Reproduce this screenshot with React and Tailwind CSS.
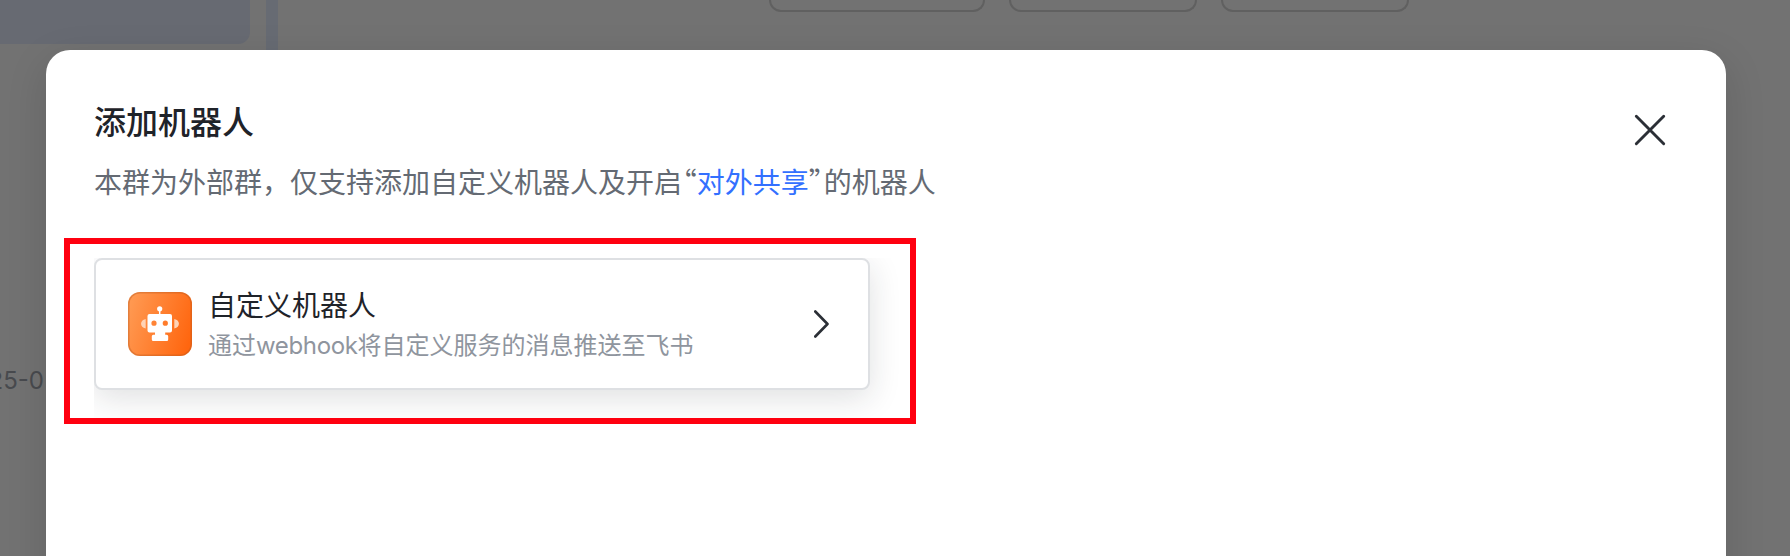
const sans = "font-['Inter','Noto_Sans_CJK_SC',sans-serif]";

function Backdrop() {
  return (
    <div className="absolute inset-0 flex overflow-hidden bg-[#727272]">
      <aside className="flex w-[266px] shrink-0 flex-col">
        <div className="h-11 w-[250px] rounded-br-xl bg-[#676a72]" />
        <div className="mt-[323px] flex w-[44px] justify-end whitespace-nowrap text-2xl leading-7 text-[#484a4e]">
          25-0
        </div>
      </aside>
      <div className="w-3 shrink-0 bg-[#676b73]" />
      <main className="flex items-start gap-6 pl-[491px]">
        <div className="h-3 w-[216px] rounded-b-xl border-2 border-t-0 border-[#606060]" />
        <div className="h-3 w-[188px] rounded-b-xl border-2 border-t-0 border-[#606060]" />
        <div className="h-3 w-[188px] rounded-b-xl border-2 border-t-0 border-[#606060]" />
      </main>
    </div>
  );
}

function Quote({ children }) {
  return (
    <span
      lang="zh-CN"
      className="inline-flex w-[14.8px] justify-center font-['Noto_Sans_CJK_SC',sans-serif] [font-feature-settings:'palt']"
    >
      {children}
    </span>
  );
}

function RobotIcon() {
  return (
    <svg width="64" height="64" viewBox="0 0 64 64" className="shrink-0">
      <defs>
        <linearGradient id="robotBg" x1="0" y1="0.35" x2="1" y2="0.65">
          <stop offset="0" stopColor="#ff9850" />
          <stop offset="1" stopColor="#ff660f" />
        </linearGradient>
      </defs>
      <rect width="64" height="64" rx="12" fill="url(#robotBg)" />
      <rect x="0.75" y="0.75" width="62.5" height="62.5" rx="11.25" fill="none" stroke="#b85a20" strokeOpacity="0.4" strokeWidth="1.5" />
      <path d="M17.700 27v9.500c-6.200-1-6.200-8.500 0-9.500zM46.300 27v9.500c6.200-1 6.200-8.500 0-9.500z" fill="#ffd3b5" />
      <circle cx="31.700" cy="16.800" r="2.600" fill="#fff" />
      <path d="M31.700 17v6" stroke="#fff" strokeWidth="1.500" />
      <path fillRule="evenodd" fill="#fff" d="M21.500 22h20.500a2 2 0 0 1 2 2v14.500a2 2 0 0 1-2 2h-4.800v2.300h1.500a1.500 1.500 0 0 1 1.500 1.500v3.200a1.500 1.500 0 0 1-1.500 1.500h-13.400a1.500 1.500 0 0 1-1.500-1.500v-3.200a1.500 1.500 0 0 1 1.500-1.500h1.700v-2.300h-5.500a2 2 0 0 1-2-2v-14.500a2 2 0 0 1 2-2zM26 28.600a2.600 2.600 0 1 0 0 5.200a2.600 2.600 0 0 0 0-5.200zM37.300 28.600a2.600 2.600 0 1 0 0 5.200a2.600 2.600 0 0 0 0-5.200z" />
    </svg>
  );
}

function RobotCard() {
  return (
    <div className="h-[160px] w-[816px] overflow-hidden">
      <div className="flex h-[132px] w-[776px] items-center rounded-lg border-2 border-[#dee0e3] bg-white pl-8 pr-[39px] shadow-[0_8px_32px_rgba(31,35,41,0.14)]">
        <RobotIcon />
        <div className="ml-4 flex-1">
          <div className="text-[28px] leading-[44px] text-[#1f2329]">自定义机器人</div>
          <div className="text-2xl leading-9 text-[#8f959e]">
            通过<span className="tracking-[-0.35px]">webhook</span>将自定义服务的消息推送至飞书
          </div>
        </div>
        <svg width="15" height="28" viewBox="0 0 15 28" fill="none" stroke="#2b2f36" strokeWidth="2.6" strokeLinecap="round" strokeLinejoin="round">
          <path d="M1.300 1.500L13.500 14L1.300 26.500" />
        </svg>
      </div>
    </div>
  );
}

export default function App() {
  return (
    <div className={`relative h-[556px] w-[1790px] overflow-hidden ${sans}`}>
      <Backdrop />
      <section className="relative ml-[46px] mt-[50px] h-[560px] w-[1680px] rounded-t-3xl bg-white px-12 pt-[51px] shadow-[0_12px_40px_rgba(0,0,0,0.13)]">
        <header className="flex items-start justify-between">
          <div>
            <h1 className="text-[32px] font-medium leading-[44px] text-[#1f2329]">添加机器人</h1>
            <p className="mb-0.5 mt-3.5 flex h-[44px] items-baseline text-[28px] leading-[44px] text-[#646a73]">
              本群为外部群，仅支持添加自定义机器人及开启<Quote>“</Quote>
              <a className="text-[#3370ff]">对外共享</a>
              <Quote>”</Quote>的机器人
            </p>
          </div>
          <svg width="32" height="32" viewBox="0 0 32 32" fill="none" stroke="#2b2f36" strokeWidth="2.9" strokeLinecap="round" className="mr-3 mt-[13px]">
            <path d="M2.300 2.300L29.700 29.700M29.700 2.300L2.300 29.700" />
          </svg>
        </header>
        <div className="mt-[53px]">
          <RobotCard />
        </div>
        <div className="absolute left-[18px] top-[188px] h-[186px] w-[852px] border-[6px] border-[#ff0010]" />
      </section>
    </div>
  );
}
